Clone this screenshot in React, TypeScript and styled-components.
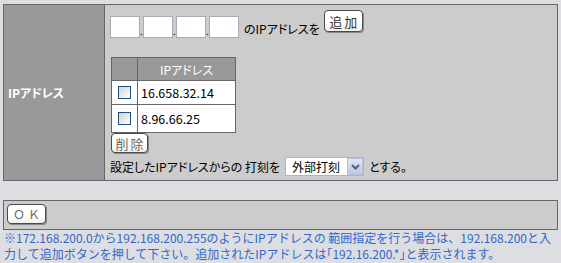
import React from "react";
import styled, { createGlobalStyle } from "styled-components";

const GlobalStyle = createGlobalStyle`
  body {
    margin: 0;
    background: #dddee2;
    font-family: "Noto Sans CJK JP", "Noto Sans", sans-serif;
    font-size: 12px;
    font-feature-settings: "palt";
    color: #000;
  }
`;

const addresses = ["16.658.32.14", "8.96.66.25"];

const App: React.FunctionComponent = () => {
  return (
    <Page>
      <GlobalStyle />
      <FormBox>
        <LabelCell>IPアドレス</LabelCell>
        <ContentCell>
          <AddRow>
            {[0, 1, 2, 3].map((idx) => (
              <React.Fragment key={idx}>
                {idx > 0 && <Dot>.</Dot>}
                <OctetInput />
              </React.Fragment>
            ))}
            <AddText>のIPアドレスを</AddText>
            <RoundButton width={39} height={22} style={{ marginLeft: 4 }}>
              追加
            </RoundButton>
          </AddRow>

          <AddrTable>
            <HeadCell />
            <HeadCell>IPアドレス</HeadCell>
            {addresses.map((addr, idx) => (
              <React.Fragment key={addr}>
                <CheckCell rowHeight={idx === 0 ? 23 : 27}>
                  <CheckBox type="checkbox" />
                </CheckCell>
                <AddrCell rowHeight={idx === 0 ? 23 : 27}>{addr}</AddrCell>
              </React.Fragment>
            ))}
          </AddrTable>

          <RoundButton width={37} height={20} muted style={{ marginLeft: 1 }}>
            削除
          </RoundButton>

          <SettingRow>
            <span>設定したIPアドレスからの 打刻を</span>
            <SelectWrap>
              <Select defaultValue="ext">
                <option value="ext">外部打刻</option>
                <option value="int">内部打刻</option>
              </Select>
              <SelectArrow>
                <svg width="9" height="6" viewBox="0 0 9 6">
                  <path
                    d="M1 1 L4.5 4.5 L8 1"
                    fill="none"
                    stroke="#4d6185"
                    strokeWidth="2"
                  />
                </svg>
              </SelectArrow>
            </SelectWrap>
            <span>とする。</span>
          </SettingRow>
        </ContentCell>
      </FormBox>

      <OkBar>
        <RoundButton width={39} height={20} muted wide>
          ＯＫ
        </RoundButton>
      </OkBar>

      <Note>
        ※172.168.200.0から192.168.200.255のようにIPアドレスの 範囲指定を行う場合は、192.168.200と入
        <br />
        力して追加ボタンを押して下さい。追加されたIPアドレスは｢192.16.200.*｣と表示されます。
      </Note>
    </Page>
  );
};

const Page = styled.div`
  padding: 4px 3px 0 3px;
`;

const FormBox = styled.div`
  display: grid;
  grid-template-columns: 101px 1fr;
  width: 555px;
  box-sizing: border-box;
  border: 1px solid #666;
`;

const LabelCell = styled.div`
  display: flex;
  align-items: center;
  padding-left: 4px;
  background: #999;
  border-right: 1px solid #666;
  color: #fff;
  font-weight: 700;
`;

const ContentCell = styled.div`
  display: flex;
  flex-direction: column;
  align-items: flex-start;
  padding: 5px 5px 4px 5px;
  background: #ccc;
`;

const AddRow = styled.div`
  display: flex;
  align-items: flex-start;
  height: 28px;
`;

const OctetInput = styled.input`
  box-sizing: border-box;
  width: 30px;
  height: 22px;
  margin: 6px 0 0 0;
  border: 1px solid #a5acb5;
  background: #fff;
  padding: 0 2px;
  font: inherit;
`;

const Dot = styled.span`
  width: 3px;
  margin-top: 14px;
  font-size: 10px;
  line-height: 14px;
  text-align: center;
`;

const AddText = styled.span`
  margin: 12px 0 0 5px;
  line-height: 14px;
`;

const RoundButton = styled.button<{
  width: number;
  height: number;
  muted?: boolean;
  wide?: boolean;
}>`
  box-sizing: border-box;
  width: ${(p) => p.width}px;
  height: ${(p) => p.height}px;
  padding: 0 0 0 ${(p) => (p.wide ? 3 : 2)}px;
  border: 1px solid #4a4a4a;
  border-radius: 4px;
  background: linear-gradient(#fff, #fff 60%, #f0f0ea);
  box-shadow: 1px 1px 0 #8a8a8a;
  color: ${(p) => (p.muted ? "#666" : "#333")};
  font-family: "Noto Sans CJK JP", sans-serif;
  font-size: ${(p) => (p.wide ? 12 : 13)}px;
  font-feature-settings: normal;
  line-height: 1;
  white-space: nowrap;
  letter-spacing: ${(p) => (p.wide ? 3 : 2)}px;
`;

const AddrTable = styled.div`
  display: grid;
  grid-template-columns: 26px 98px;
  margin: 19px 0 0 1px;
  border-left: 1px solid #666;
  border-top: 1px solid #666;
`;

const HeadCell = styled.div`
  height: 22px;
  display: flex;
  align-items: center;
  justify-content: center;
  background: #999;
  color: #fff;
  border-right: 1px solid #666;
  border-bottom: 1px solid #666;
`;

const CheckCell = styled.div<{ rowHeight: number }>`
  height: ${(p) => p.rowHeight}px;
  display: flex;
  align-items: center;
  justify-content: center;
  background: #fff;
  border-right: 1px solid #666;
  border-bottom: 1px solid #666;
`;

const AddrCell = styled.div<{ rowHeight: number }>`
  height: ${(p) => p.rowHeight}px;
  display: flex;
  align-items: center;
  padding-left: 3px;
  background: #fff;
  border-right: 1px solid #666;
  border-bottom: 1px solid #666;
  font-size: 12.5px;
`;

const CheckBox = styled.input`
  appearance: none;
  box-sizing: border-box;
  width: 13px;
  height: 13px;
  margin: 0;
  border: 1px solid #1c5180;
  background: linear-gradient(135deg, #d2d2cc, #fff);
`;

const SettingRow = styled.div`
  display: flex;
  align-items: center;
  height: 19px;
  margin-top: 4px;
  white-space: nowrap;
`;

const SelectWrap = styled.span`
  position: relative;
  display: inline-block;
  margin: 0 5px;
`;

const Select = styled.select`
  appearance: none;
  box-sizing: border-box;
  width: 79px;
  height: 19px;
  padding: 0 0 0 6px;
  border: 1px solid #b4b4b4;
  background: #fff;
  font-family: "Noto Sans CJK JP", sans-serif;
  font-size: 12px;
  color: #000;
`;

const SelectArrow = styled.span`
  position: absolute;
  right: 1px;
  top: 1px;
  width: 16px;
  height: 17px;
  box-sizing: border-box;
  display: flex;
  align-items: center;
  justify-content: center;
  border: 1px solid #b9c2dc;
  background: linear-gradient(#dfe4f2, #c0c8de);
  pointer-events: none;
`;

const OkBar = styled.div`
  width: 555px;
  box-sizing: border-box;
  margin-top: 19px;
  padding: 3px 3px 5px 3px;
  height: 30px;
  background: #ccc;
  border: 1px solid #666;
`;

const Note = styled.p`
  margin: 0;
  padding-left: 1px;
  color: #3366cc;
  font-size: 12px;
  font-feature-settings: normal;
  line-height: 16px;
  white-space: nowrap;
`;

export default App;
